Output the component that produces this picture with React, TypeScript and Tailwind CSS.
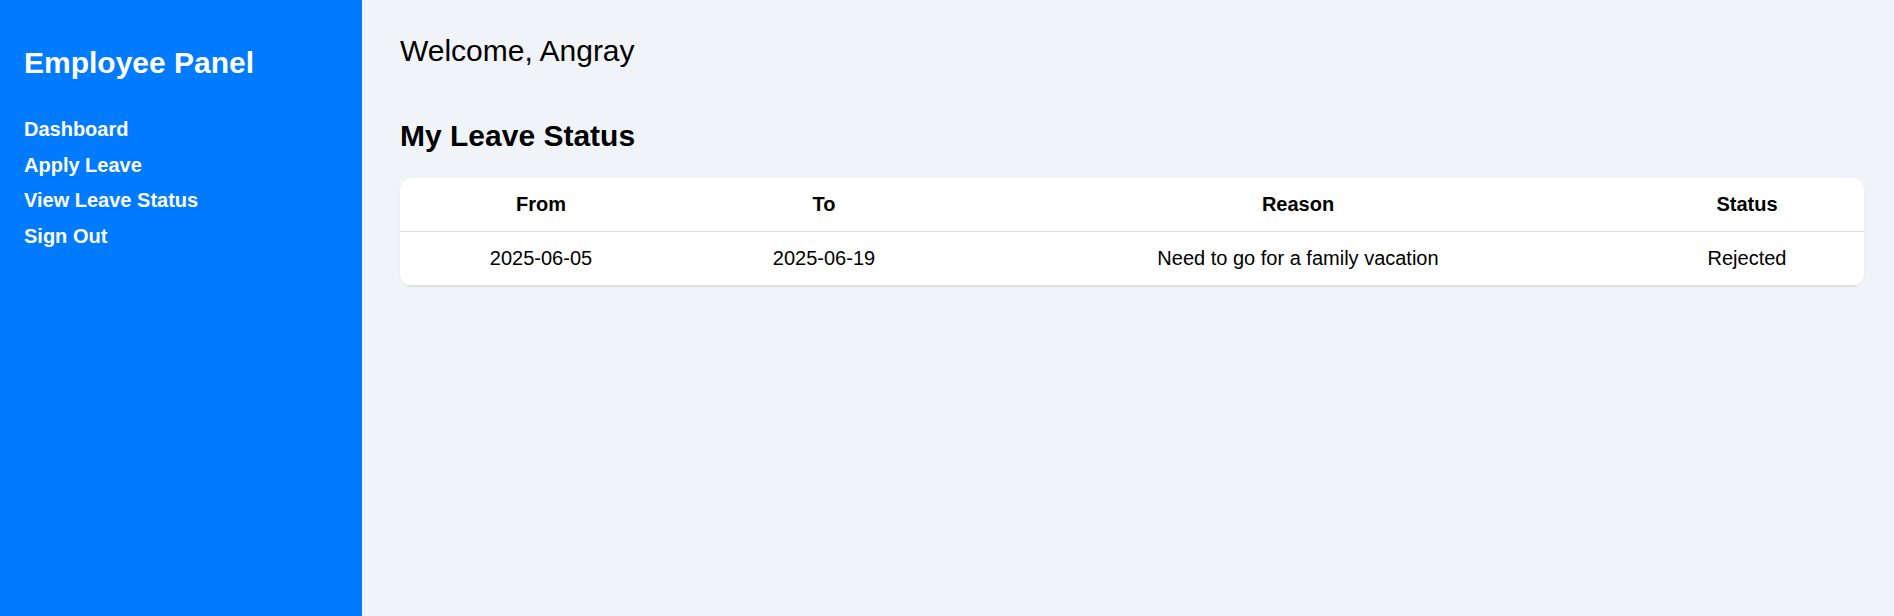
import React from "react";

const navLinks = ["Dashboard", "Apply Leave", "View Leave Status", "Sign Out"];

const leaves = [
  {
    from: "2025-06-05",
    to: "2025-06-19",
    reason: "Need to go for a family vacation",
    status: "Rejected",
  },
];

const Sidebar = () => {
  return (
    <aside className="w-[362px] shrink-0 bg-[#007bff] px-6 pt-[47px] text-white">
      <h2 className="text-[30px] font-bold leading-[32px]">Employee Panel</h2>
      <nav className="mt-[33px] flex flex-col">
        {navLinks.map((link) => (
          <a
            key={link}
            href="#"
            className="block text-[20px] font-bold leading-[35.6px] text-white"
          >
            {link}
          </a>
        ))}
      </nav>
    </aside>
  );
};

const App = () => {
  return (
    <div className="flex min-h-screen font-['Liberation_Sans',Arial,sans-serif] text-black">
      <Sidebar />
      <main className="flex-1 bg-[#f0f4f8] pl-[38px] pr-[30px] pt-[35px] pb-10">
        <h2 className="text-[30px] font-normal leading-[32px]">Welcome, Angray</h2>
        <h3 className="mt-[53px] text-[30px] font-bold leading-[32px]">My Leave Status</h3>

        <div className="mt-[26px] overflow-hidden rounded-[12px] bg-white shadow-[0_1px_2px_rgba(0,0,0,0.08)]">
          <table className="w-full table-fixed border-collapse text-[20px] leading-[23px]">
            <colgroup>
              <col className="w-[282px]" />
              <col className="w-[284px]" />
              <col className="w-[664px]" />
              <col className="w-[234px]" />
            </colgroup>
            <thead>
              <tr className="border-b border-[#ddd]">
                <th className="py-[15px] text-center font-bold">From</th>
                <th className="py-[15px] text-center font-bold">To</th>
                <th className="py-[15px] text-center font-bold">Reason</th>
                <th className="py-[15px] text-center font-bold">Status</th>
              </tr>
            </thead>
            <tbody>
              {leaves.map((leave) => (
                <tr key={leave.from} className="border-b border-[#ddd]">
                  <td className="py-[15px] text-center">{leave.from}</td>
                  <td className="py-[15px] text-center">{leave.to}</td>
                  <td className="py-[15px] text-center">{leave.reason}</td>
                  <td className="py-[15px] text-center">{leave.status}</td>
                </tr>
              ))}
            </tbody>
          </table>
        </div>
      </main>
    </div>
  );
};

export default App;
